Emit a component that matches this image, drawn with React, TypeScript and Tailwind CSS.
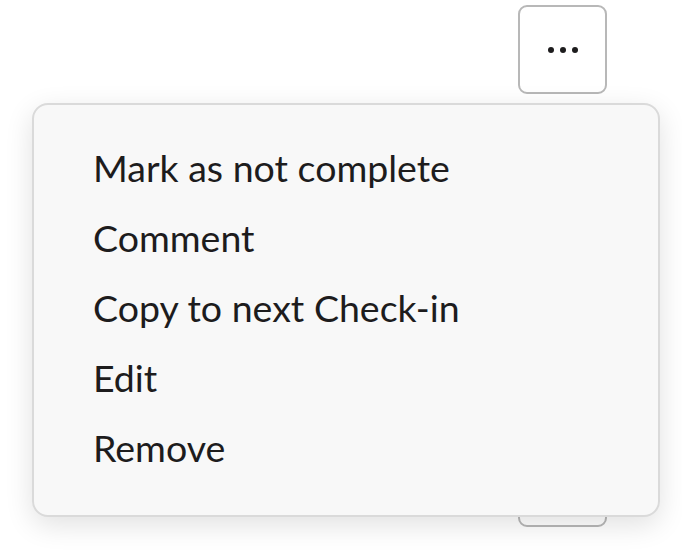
import React from "react";

function DotsButton({ dots = true }: { dots?: boolean }) {
  return (
    <button className="flex h-[89px] w-[89px] items-center justify-center gap-[6px] rounded-[9px] border-2 border-[#b8b8b8] bg-white">
      {dots && (
        <>
          <span className="h-[6px] w-[6px] rounded-full bg-[#1d1c1d]" />
          <span className="h-[6px] w-[6px] rounded-full bg-[#1d1c1d]" />
          <span className="h-[6px] w-[6px] rounded-full bg-[#1d1c1d]" />
        </>
      )}
    </button>
  );
}

export default function App() {
  const items = [
    "Mark as not complete",
    "Comment",
    "Copy to next Check-in",
    "Edit",
    "Remove",
  ];
  return (
    <div className="relative h-[550px] w-[682px] overflow-hidden bg-white font-['Lato',sans-serif] text-[#1d1c1d]">
      <div className="flex flex-col items-end gap-[344px] pr-[75px] pt-[5px]">
        <DotsButton />
        <DotsButton dots={false} />
      </div>
      <div className="absolute left-[32px] top-[103px] w-[628px] rounded-[16px] border-2 border-[#dadada] bg-[#f8f8f8] pb-[32px] pt-[28px] shadow-[0_8px_28px_rgba(0,0,0,0.12)]">
        <ul className="flex flex-col">
          {items.map((t) => (
            <li
              key={t}
              className="flex h-[70px] items-center pl-[59px] text-[37.5px] leading-none"
            >
              {t}
            </li>
          ))}
        </ul>
      </div>
    </div>
  );
}
